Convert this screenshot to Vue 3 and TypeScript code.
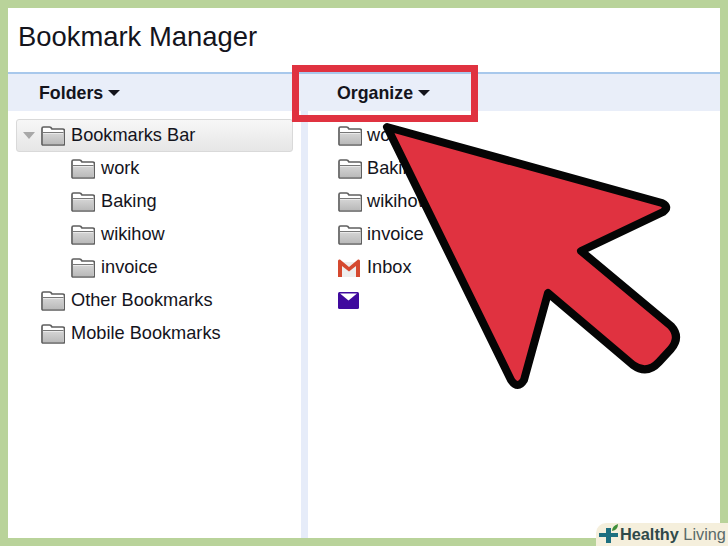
<script setup lang="ts">
interface Row {
  label: string
  depth: number
}

const folders: Row[] = [
  { label: 'work', depth: 1 },
  { label: 'Baking', depth: 1 },
  { label: 'wikihow', depth: 1 },
  { label: 'invoice', depth: 1 },
  { label: 'Other Bookmarks', depth: 0 },
  { label: 'Mobile Bookmarks', depth: 0 },
]

const items = ['work', 'Baking', 'wikihow', 'invoice']
</script>

<template>
  <div class="page">
    <svg width="0" height="0" class="defs">
      <defs>
        <linearGradient id="folder-fill" x1="0" y1="0" x2="0" y2="1">
          <stop offset="0" stop-color="#d4d4d4" />
          <stop offset="1" stop-color="#bababa" />
        </linearGradient>
        <symbol id="folder" viewBox="0 0 24 20">
          <path d="M1 18V2.500q0-1.500 1.500-1.500h6q1.500 0 2.500 2h10.500q2 0 2 2v13q0 1-1 1H2q-1 0-1-1z" fill="#fff" stroke="#5f5f5f" stroke-width="1.700" />
          <path d="M2 7.500h20V18H2z" fill="url(#folder-fill)" />
          <path d="M1.500 6.500h21" stroke="#777" stroke-width="1" fill="none" />
        </symbol>
      </defs>
    </svg>

    <div class="panel">
      <header class="title">Bookmark Manager</header>
      <div class="toolbar">
        <div class="tool tool-left">Folders <span class="caret"></span></div>
        <div class="tool tool-right">Organize <span class="caret"></span></div>
      </div>
      <div class="body">
        <div class="tree">
          <div class="row selected">
            <span class="twisty"></span>
            <svg class="folder"><use href="#folder" /></svg>
            <span>Bookmarks Bar</span>
          </div>
          <div v-for="f in folders" :key="f.label" class="row" :class="f.depth ? 'child' : 'top'">
            <svg class="folder"><use href="#folder" /></svg>
            <span>{{ f.label }}</span>
          </div>
        </div>
        <div class="splitter"></div>
        <div class="list">
          <div v-for="name in items" :key="name" class="row">
            <svg class="folder"><use href="#folder" /></svg>
            <span>{{ name }}</span>
          </div>
          <div class="row">
            <svg class="gmail" viewBox="0 0 22 18">
              <path d="M3 3h16v15H3z" fill="#eeeeee" />
              <path d="M0 2q0-2 2-1.500l9 7.500 9-7.500q2-.5 2 1.500v16h-4V7l-7 5.500L4 7v11H0z" fill="#d5492f" />
            </svg>
            <span>Inbox</span>
          </div>
          <div class="row">
            <svg class="ymail" viewBox="0 0 21 17">
              <rect width="21" height="17" rx="1.500" fill="#3f0a9e" />
              <path d="M2 1.500h17L10.500 8.500z" fill="#fff" />
            </svg>
          </div>
        </div>
      </div>
    </div>

    <div class="highlight"></div>

    <svg class="arrow" viewBox="0 0 728 546" width="728" height="546">
      <path
        d="M387 127L662 203Q670 207 663 212L581 251L671 326Q681 337 671 349L659 362Q647 375 633 365L548 293L524 380Q518 390 511 380Z"
        fill="#e03240"
        stroke="#050505"
        stroke-width="8"
        stroke-linejoin="round"
      />
    </svg>

    <div class="badge">
      <svg class="badge-icon" viewBox="0 0 21 21">
        <path d="M7 4h5v5h7v4h-7v6H7v-6H0V9h7z" fill="#1d6f80" />
        <path d="M13 7q0-5 6-7q0 6-6 7z" fill="#3f8f3a" />
      </svg>
      <span class="badge-text"><b>Healthy</b> Living</span>
    </div>
  </div>
</template>

<style>
html,
body {
  margin: 0;
  background: #b9d39a;
}
</style>

<style scoped>
.page {
  position: relative;
  width: 728px;
  height: 546px;
  box-sizing: border-box;
  padding: 8px;
  background: #b9d39a;
  overflow: hidden;
  font-family: "Liberation Sans", Arial, sans-serif;
  color: #14141c;
}

.defs {
  position: absolute;
}

.panel {
  display: flex;
  flex-direction: column;
  height: 530px;
  background: #fff;
}

.title {
  height: 64px;
  box-sizing: border-box;
  padding: 12px 0 0 10px;
  font-size: 27.400px;
  line-height: 34px;
  color: #14141c;
}

.toolbar {
  display: flex;
  height: 39px;
  box-sizing: border-box;
  border-top: 2px solid #a8c8ec;
  background: #e9eef9;
  font-size: 17.800px;
  font-weight: bold;
  line-height: 39px;
}

.tool-left {
  width: 300px;
  box-sizing: border-box;
  padding-left: 31px;
}

.tool-right {
  padding-left: 29px;
}

.caret {
  display: inline-block;
  width: 0;
  height: 0;
  border: 6px solid transparent;
  border-top: 6px solid #14141c;
  border-bottom: 0;
  vertical-align: 3px;
}

.body {
  display: flex;
  flex: 1;
  min-height: 0;
}

.tree {
  width: 293px;
  box-sizing: border-box;
  padding: 8px 8px 0;
}

.splitter {
  width: 7px;
  background: #e6ecf9;
}

.list {
  flex: 1;
  padding: 8px 0 0 30px;
}

.list .row {
  gap: 5px;
}

.row {
  display: flex;
  align-items: center;
  gap: 6px;
  height: 33px;
  font-size: 18.200px;
}

.row.top {
  padding-left: 25px;
}

.row.child {
  padding-left: 55px;
}

.selected {
  box-sizing: border-box;
  padding-left: 6px;
  gap: 0;
  border: 1px solid #d9d9d9;
  border-radius: 3px;
  background: linear-gradient(#f7f7f7, #e6e6e6);
}

.selected .folder {
  margin: 0 6px 0 6px;
}

.twisty {
  width: 0;
  height: 0;
  border: 6px solid transparent;
  border-top: 7px solid #a8a8a8;
  border-bottom: 0;
}

.folder {
  flex: none;
  width: 24px;
  height: 20px;
}

.gmail {
  flex: none;
  width: 22px;
  height: 18px;
  margin-right: 2px;
}

.ymail {
  flex: none;
  width: 21px;
  height: 17px;
}

.highlight {
  position: absolute;
  left: 292px;
  top: 65px;
  width: 186px;
  height: 57px;
  box-sizing: border-box;
  border: 7px solid #e03240;
}

.arrow {
  position: absolute;
  left: 0;
  top: 0;
}

.badge {
  position: absolute;
  right: 0;
  bottom: 0;
  display: flex;
  align-items: center;
  width: 132px;
  height: 23px;
  box-sizing: border-box;
  padding-left: 3px;
  border-top-left-radius: 10px;
  background: #f5efdc;
}

.badge-icon {
  flex: none;
  width: 21px;
  height: 21px;
}

.badge-text {
  font-size: 16.300px;
  white-space: nowrap;
  color: #5a6a6a;
}

.badge-text b {
  color: #2f4a4a;
}
</style>
